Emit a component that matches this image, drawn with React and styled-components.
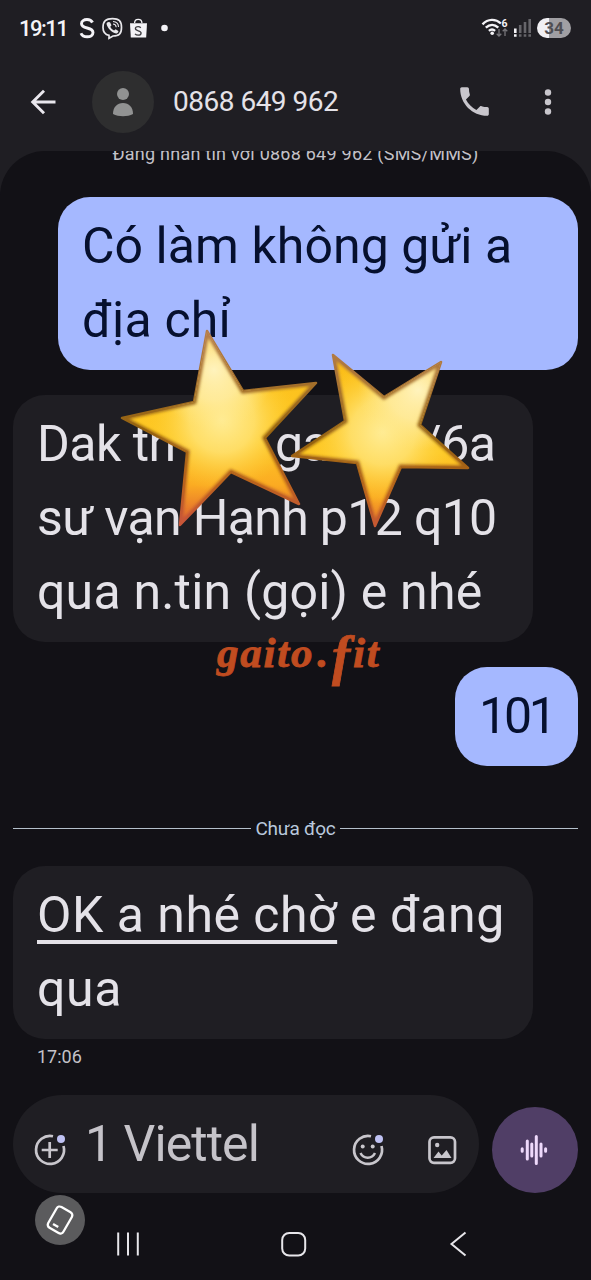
import styled, { createGlobalStyle } from "styled-components";

const GlobalStyle = createGlobalStyle`
  * {
    box-sizing: border-box;
  }
  body {
    margin: 0;
    background: #1f1e23;
  }
  svg {
    display: block;
    flex: none;
  }
`;

const Screen = styled.div`
  position: relative;
  display: flex;
  flex-direction: column;
  width: 591px;
  height: 1280px;
  overflow: hidden;
  background: #1f1e23;
  color: #e4e2e8;
  font-family: Roboto, "Liberation Sans", sans-serif;
`;

const StatusBar = styled.div`
  display: flex;
  align-items: center;
  height: 56px;
  padding: 0 20px 0 19px;
`;

const Clock = styled.span`
  width: 60px;
  font-size: 22px;
  font-weight: 500;
  color: #f4f3f7;
  letter-spacing: -1.5px;
`;

const StatusRight = styled.div`
  display: flex;
  align-items: center;
  gap: 6px;
  margin-left: auto;
`;

const Battery = styled.div`
  width: 34px;
  height: 20px;
  border-radius: 10px;
  background: linear-gradient(90deg, #f1f0f4 35%, #a09fa3 35%);
  color: #4f4e53;
  font-size: 17px;
  font-weight: 700;
  line-height: 20px;
  text-align: center;
`;

const Header = styled.header`
  display: flex;
  align-items: center;
  height: 95px;
  padding: 0 35px 4px 29px;
`;

const Avatar = styled.div`
  display: flex;
  align-items: center;
  justify-content: center;
  width: 62px;
  height: 62px;
  margin-left: 35px;
  border-radius: 50%;
  background: #2e2e2f;
`;

const Contact = styled.h1`
  flex: 1;
  margin: 0 0 0 19px;
  font-size: 28px;
  font-weight: 400;
  letter-spacing: -0.5px;
`;

const Actions = styled.div`
  display: flex;
  align-items: center;
  gap: 48px;
`;

const Panel = styled.main`
  flex: 1;
  display: flex;
  flex-direction: column;
  padding: 0 13px;
  border-radius: 45px 45px 0 0;
  background: #121116;
  overflow: hidden;
`;

const Notice = styled.p`
  height: 24px;
  margin: -9px 0 31px;
  font-size: 18px;
  line-height: 24px;
  letter-spacing: 0.24px;
  text-align: center;
  white-space: nowrap;
  color: #c3c1c8;
`;

const Bubble = styled.div`
  align-self: ${(p) => (p.$sent ? "flex-end" : "flex-start")};
  width: ${(p) => p.$width || 520}px;
  margin-bottom: ${(p) => p.$gap}px;
  padding: 12px 24px 13px;
  border-radius: 32px;
  background: ${(p) => (p.$sent ? "#a5b8ff" : "#1f1e23")};
  color: ${(p) => (p.$sent ? "#06102e" : "#e4e2e8")};
  font-size: 50px;
  line-height: 74px;
`;

const Line = styled.div`
  height: 74px;
  white-space: nowrap;
  letter-spacing: ${(p) => p.$track || 0}px;
`;

const Piece = styled.span`
  display: inline-block;
  width: ${(p) => p.$width}px;
`;

const Underlined = styled.span`
  text-decoration: underline;
  text-decoration-thickness: 4px;
  text-underline-offset: 8px;
  text-decoration-skip-ink: none;
`;

const Unread = styled.div`
  display: flex;
  align-items: center;
  gap: 4px;
  height: 24px;
  margin-bottom: 26px;
  color: #b9c8dc;
  font-size: 19px;
  letter-spacing: -0.2px;

  &::before,
  &::after {
    content: "";
    flex: 1;
    height: 1px;
    background: #b4c0cb;
  }
`;

const Time = styled.div`
  height: 56px;
  padding-left: 24px;
  font-size: 18px;
  line-height: 36px;
  color: #c4c2c9;
`;

const Composer = styled.div`
  display: flex;
  align-items: flex-end;
  justify-content: space-between;
  height: 98px;
`;

const InputBox = styled.div`
  display: flex;
  align-items: center;
  width: 466px;
  height: 98px;
  padding: 12px 20px 0;
  border-radius: 49px;
  background: #1f1e23;
`;

const Placeholder = styled.span`
  flex: 1;
  margin: -13px 0 0 18px;
  font-size: 50px;
  line-height: 74px;
  color: #c5c3c9;
  letter-spacing: -0.95px;
`;

const Tools = styled.div`
  display: flex;
  align-items: center;
  gap: 40px;
`;

const Voice = styled.button`
  display: flex;
  align-items: center;
  justify-content: center;
  width: 86px;
  height: 86px;
  padding: 0 2px 0 0;
  border: 0;
  border-radius: 50%;
  background: #503e66;
`;

const NavBar = styled.nav`
  display: flex;
  justify-content: space-between;
  padding: 37px 110px 0 102px;
`;

const RotateButton = styled.div`
  position: absolute;
  left: 35px;
  top: 1195px;
  display: flex;
  align-items: center;
  justify-content: center;
  width: 50px;
  height: 50px;
  border-radius: 50%;
  background: #5b5b5d;
`;

const Stickers = styled.svg`
  position: absolute;
  left: 0;
  top: 0;
`;

const Watermark = styled.div`
  position: absolute;
  left: 217px;
  top: 628px;
  font-family: "Liberation Serif", serif;
  font-size: 43px;
  font-style: italic;
  font-weight: 700;
  line-height: 50px;
  letter-spacing: 1.8px;
  white-space: nowrap;
  color: #c04c20;
  -webkit-text-stroke: 0.8px #c04c20;
`;

const Dot = styled.span`
  margin: 0 2px 0 3px;
`;

const TallLetter = styled.span`
  margin-right: 1px;
  font-size: 55px;
  line-height: 0;
  vertical-align: -7px;
`;

const stars = [
  {
    id: "left",
    points:
      "207,331 243,391 316,383 265,438 299,504 231,472 180,525 187,452 122,418 194,402",
    cx: 222,
    cy: 420,
    hot: [214, 370],
  },
  {
    id: "right",
    points:
      "333,355 384,397 441,362 420,425 468,468 401,467 375,526 357,463 292,456 345,421",
    cx: 383,
    cy: 432,
    hot: [418, 390],
  },
];

function Star({ id, points, cx, cy, hot }) {
  return (
    <g>
      <defs>
        <linearGradient
          id={`base-${id}`}
          gradientUnits="userSpaceOnUse"
          x1={cx}
          y1={cy - 75}
          x2={cx}
          y2={cy + 100}
        >
          <stop offset="0" stopColor="#fbbd18" />
          <stop offset="0.55" stopColor="#fec926" />
          <stop offset="0.8" stopColor="#fbab22" />
          <stop offset="1" stopColor="#e0662f" />
        </linearGradient>
        <radialGradient
          id={`core-${id}`}
          gradientUnits="userSpaceOnUse"
          cx={cx}
          cy={cy}
          r="72"
        >
          <stop offset="0" stopColor="#ffec95" />
          <stop offset="0.45" stopColor="#ffe271" stopOpacity="0.85" />
          <stop offset="1" stopColor="#ffd030" stopOpacity="0" />
        </radialGradient>
        <radialGradient
          id={`hot-${id}`}
          gradientUnits="userSpaceOnUse"
          cx={hot[0]}
          cy={hot[1]}
          r="60"
        >
          <stop offset="0" stopColor="#fff3bd" />
          <stop offset="0.5" stopColor="#ffeda5" stopOpacity="0.75" />
          <stop offset="1" stopColor="#ffe680" stopOpacity="0" />
        </radialGradient>
        <linearGradient
          id={`edge-${id}`}
          gradientUnits="userSpaceOnUse"
          x1={cx}
          y1={cy - 85}
          x2={cx}
          y2={cy + 100}
        >
          <stop offset="0" stopColor="#b57d48" />
          <stop offset="0.5" stopColor="#94620f" />
          <stop offset="0.8" stopColor="#b9621c" />
          <stop offset="1" stopColor="#c85638" />
        </linearGradient>
        <clipPath id={`clip-${id}`}>
          <polygon points={points} />
        </clipPath>
      </defs>
      <polygon
        points={points}
        fill={`url(#base-${id})`}
        stroke={`url(#edge-${id})`}
        strokeWidth="2.5"
        strokeLinejoin="round"
      />
      <g clipPath={`url(#clip-${id})`}>
        <polygon points={points} fill={`url(#core-${id})`} />
        <polygon points={points} fill={`url(#hot-${id})`} />
        <polygon
          points={points}
          fill="none"
          stroke={`url(#edge-${id})`}
          strokeWidth="5"
          filter="url(#soft)"
        />
      </g>
    </g>
  );
}

function StatusIcons() {
  return (
    <svg width="92" height="24" viewBox="79 16 92 24" fill="none">
      <path
        d="M92.500 22.500c-1-2-3-3-5.500-3-3 0-5.500 1.500-5.500 4.200 0 5.800 11.500 2.800 11.500 8.800 0 2.800-2.600 4.300-5.800 4.300-3 0-5.300-1.400-6.200-3.600"
        stroke="#f4f3f7"
        strokeWidth="2.900"
      />
      <path
        d="M112.500 18.700c6.500 0 9 2.300 9 8.800s-2.500 8.400-8.500 8.500l-4 2.200v-2.900c-4.500-.8-6-3.300-6-7.800 0-6.500 3-8.800 9.500-8.800z"
        stroke="#e9e8ec"
        strokeWidth="1.700"
      />
      <path
        d="M108 22l2 .3 1.500 3-1.200 1.500c.8 1.800 2 3 3.800 3.800l1.500-1.300 2.700 1.800c.5 1-.9 2.700-2.200 2.500-4.500-1.200-8.400-5.300-9.500-9.400-.2-.9.500-1.800 1.400-2.200z"
        fill="#e9e8ec"
      />
      <path
        d="M113 21.500c3.300.2 5.500 2.300 5.500 5.600M113 24c1.900.1 3.100 1.300 3.200 3.200"
        stroke="#e9e8ec"
        strokeWidth="1.100"
      />
      <path d="M130 23.200h17l-.8 14.300h-15.400z" fill="#f4f3f7" />
      <path
        d="M134.600 23c0-2.300 1.600-3.600 3.600-3.600s3.700 1.300 3.700 3.600"
        stroke="#f4f3f7"
        strokeWidth="1.300"
      />
      <path
        d="M140.800 27.800c-.7-.8-1.500-1.200-2.700-1.200-1.600 0-2.700.8-2.700 2 0 2.900 5.700 1.500 5.700 4.400 0 1.400-1.300 2.200-3 2.200-1.300 0-2.400-.5-3.100-1.300"
        stroke="#3d3c40"
        strokeWidth="1.300"
      />
      <circle cx="164.500" cy="28" r="3.300" fill="#f4f3f7" />
    </svg>
  );
}

function Wifi() {
  return (
    <svg width="50" height="20" viewBox="481 18 50 20" fill="none">
      <g stroke="#f4f3f7" strokeWidth="2.400">
        <path d="M482.500 24.300c5.500-5.700 13-5.900 18.400-.8" />
        <path d="M485.800 27.700c4-3.700 8.700-3.700 12.500 0" />
        <path d="M488.900 30.900c2-1.700 4.200-1.700 6.200 0" />
      </g>
      <circle cx="492.200" cy="33.200" r="1.800" fill="#f4f3f7" />
      <text
        x="501.500"
        y="26.800"
        fill="#f4f3f7"
        fontFamily="Roboto, sans-serif"
        fontSize="10.500"
        fontWeight="700"
      >
        6
      </text>
      <path
        d="M499 29v7M496.700 33.700l2.300 2.300 2.300-2.300M505 36v-7M502.700 31.300L505 29l2.300 2.300"
        stroke="#77767b"
        strokeWidth="1.300"
      />
      <g strokeWidth="2.600">
        <path d="M515.300 28.500v4.500M515.300 34.300v2.500" stroke="#f4f3f7" />
        <path
          d="M520.200 25v8M525 22v11M529.700 19v14M520.200 34.300v2.500M525 34.300v2.500M529.700 34.300v2.500"
          stroke="#66656a"
        />
      </g>
    </svg>
  );
}

function App() {
  return (
    <Screen>
      <GlobalStyle />
      <StatusBar>
        <Clock>19:11</Clock>
        <StatusIcons />
        <StatusRight>
          <Wifi />
          <Battery>34</Battery>
        </StatusRight>
      </StatusBar>

      <Header>
        <svg width="28" height="28" viewBox="0 0 28 28" fill="none">
          <path
            d="M26.500 14H4M15 2.700L3.700 14 15 25.300"
            stroke="#e9e7ed"
            strokeWidth="2.900"
          />
        </svg>
        <Avatar>
          <svg width="22" height="30" viewBox="0 0 22 30" fill="#919292">
            <circle cx="11" cy="7" r="6" />
            <path d="M1 27c0-7 4-11 10-11s10 4 10 11c-5.500 3-14.500 3-20 0z" />
          </svg>
        </Avatar>
        <Contact>0868 649 962</Contact>
        <Actions>
          <svg width="35" height="35" viewBox="1 1 22 22" fill="#c8c6cc">
            <path d="M6.620 10.790c1.440 2.830 3.760 5.140 6.590 6.590l2.200-2.200c.270-.270.670-.360 1.020-.240 1.120.370 2.330.570 3.570.570.550 0 1 .450 1 1V20c0 .550-.450 1-1 1-9.390 0-17-7.610-17-17 0-.550.450-1 1-1h3.500c.550 0 1 .450 1 1 0 1.250.200 2.450.570 3.570.110.350.030.740-.250 1.020l-2.200 2.200z" />
          </svg>
          <svg width="16" height="28" viewBox="0 0 16 28" fill="#c8c6cc">
            <circle cx="8" cy="4.500" r="3.200" />
            <circle cx="8" cy="14" r="3.200" />
            <circle cx="8" cy="23.500" r="3.200" />
          </svg>
        </Actions>
      </Header>

      <Panel>
        <Notice>Đang nhắn tin với 0868 649 962 (SMS/MMS)</Notice>
        <Bubble $sent $gap={25}>
          <Line $track={0.05}>Có làm không gửi a</Line>
          <Line $track={0.2}>địa chỉ</Line>
        </Bubble>
        <Bubble $gap={25}>
          <Line $track={-0.5}>
            <Piece $width={238}>Dak th</Piece>
            <Piece $width={146}>ga</Piece>
            <Piece>/6a</Piece>
          </Line>
          <Line $track={-0.65}>sư vạn Hạnh p12 q10</Line>
          <Line $track={0.2}>qua n.tin (gọi) e nhé</Line>
        </Bubble>
        <Bubble $sent $width={123} $gap={50}>
          <Line $track={-3.2}>101</Line>
        </Bubble>
        <Unread>Chưa đọc</Unread>
        <Bubble $gap={0}>
          <Line $track={0.5}>
            <Underlined>OK a nhé chờ</Underlined> e đang
          </Line>
          <Line $track={0.6}>qua</Line>
        </Bubble>
        <Time>17:06</Time>

        <Composer>
          <InputBox>
            <svg width="34" height="34" viewBox="0 0 34 34" fill="none">
              <path
                d="M20 3.200A14 14 0 1 0 30.500 13"
                stroke="#c8c6cc"
                strokeWidth="2.700"
              />
              <path d="M16.700 9v16M8.700 17h16" stroke="#c8c6cc" strokeWidth="2.700" />
              <circle cx="28" cy="6" r="4" fill="#bfc2f3" />
            </svg>
            <Placeholder>1 Viettel</Placeholder>
            <Tools>
              <svg width="34" height="34" viewBox="0 0 34 34" fill="none">
                <path
                  d="M20 3.200A14 14 0 1 0 30.500 13"
                  stroke="#c8c6cc"
                  strokeWidth="2.700"
                />
                <circle cx="11.700" cy="13.500" r="2" fill="#c8c6cc" />
                <circle cx="21.700" cy="13.500" r="2" fill="#c8c6cc" />
                <path
                  d="M9.500 20c3 6.300 11.500 6.300 14.500 0"
                  stroke="#c8c6cc"
                  strokeWidth="2.500"
                />
                <circle cx="28" cy="6" r="4" fill="#bfc2f3" />
              </svg>
              <svg width="34" height="34" viewBox="0 0 34 34" fill="none">
                <rect
                  x="4.500"
                  y="4.300"
                  width="25.500"
                  height="25.500"
                  rx="4.500"
                  stroke="#c8c6cc"
                  strokeWidth="2.700"
                />
                <circle cx="12.200" cy="12" r="2.200" fill="#c8c6cc" />
                <path d="M8.500 25l5-6.500 3.200 4 4.800-5.500 5 8z" fill="#c8c6cc" />
              </svg>
            </Tools>
          </InputBox>
          <Voice>
            <svg width="30" height="34" viewBox="0 0 30 34" fill="none">
              <path
                d="M3.200 15.800v2.500M8.300 8v18M12.800 11v12M17.300 3.500v27M22 11v12M26.600 15.800v2.500"
                stroke="#eed9fb"
                strokeWidth="3"
                strokeLinecap="round"
              />
            </svg>
          </Voice>
        </Composer>

        <NavBar>
          <svg width="26" height="28" viewBox="0 0 26 28" fill="none">
            <path
              d="M3.200 2.500v23M13 2.500v23M22.800 2.500v23"
              stroke="#e7e6ea"
              strokeWidth="2"
            />
          </svg>
          <svg width="28" height="28" viewBox="1.500 0 28 28" fill="none">
            <rect
              x="2.700"
              y="3"
              width="23"
              height="22.500"
              rx="7"
              stroke="#e7e6ea"
              strokeWidth="2"
            />
          </svg>
          <svg width="20" height="28" viewBox="0 0 20 28" fill="none">
            <path d="M17.500 2.500L3.500 14l14 11.500" stroke="#e7e6ea" strokeWidth="2" />
          </svg>
        </NavBar>
      </Panel>

      <RotateButton>
        <svg width="34" height="34" viewBox="0 0 34 34" fill="none">
          <g transform="rotate(30 17 17)" stroke="#fff" strokeWidth="2.300">
            <rect x="8.300" y="5" width="17.500" height="24" rx="3.500" />
            <path d="M13 24h6" />
          </g>
        </svg>
      </RotateButton>

      <Stickers width="591" height="640" viewBox="0 0 591 640">
        <filter id="soft" x="-10%" y="-10%" width="120%" height="120%">
          <feGaussianBlur stdDeviation="1.800" />
        </filter>
        {stars.map((s) => (
          <Star key={s.id} {...s} />
        ))}
      </Stickers>
      <Watermark>
        gaito<Dot>.</Dot>
        <TallLetter>f</TallLetter>it
      </Watermark>
    </Screen>
  );
}

export default App;
